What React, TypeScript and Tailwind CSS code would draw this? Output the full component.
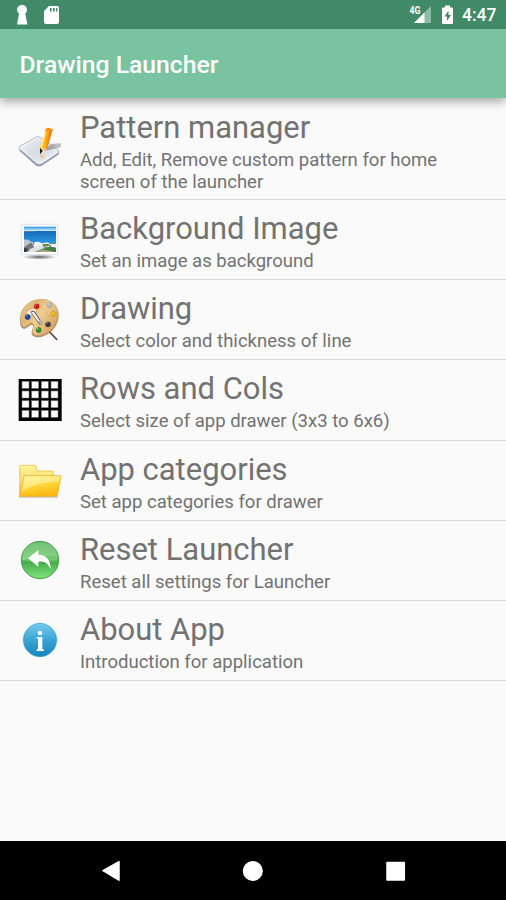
import type { ReactNode } from 'react';

function PatternIcon() {
  return (
    <svg className="block h-[60px] w-[60px]" viewBox="0 0 180 180">
      <defs>
        <linearGradient id="pad" x1="0" y1="0" x2="1" y2="1">
          <stop offset="0" stopColor="#fff" />
          <stop offset=".45" stopColor="#dfe2e8" />
          <stop offset="1" stopColor="#f4f6f8" />
        </linearGradient>
        <linearGradient id="pencil" x1="0" y1="0" x2="1" y2=".35">
          <stop offset=".2" stopColor="#ffe060" />
          <stop offset=".55" stopColor="#ffb21c" />
          <stop offset=".9" stopColor="#f06a00" />
        </linearGradient>
        <linearGradient id="pencilShade" x1="0" y1="0" x2="1" y2="0">
          <stop offset="0" stopColor="#666" />
          <stop offset="1" stopColor="#aaa" />
        </linearGradient>
      </defs>
      <path d="M28 102l52 44q8 4 15 0l52-34v6l-52 34q-8 4-16 0L29 108z" fill="#8997aa" />
      <path d="M29 94l48-27q6-4 13 0l54 38q6 6 0 10l-49 32q-8 4-15-1L29 103q-4-5 0-9z" fill="url(#pad)" stroke="#8e9bae" strokeWidth="2" />
      <path d="M38 98l44-26 50 37-43 31z" fill="#cfd4dc" opacity=".35" />
      <path d="M94 106l34-20 25-1v12l-35 8-24 3z" fill="url(#pencilShade)" opacity=".65" />
      <path d="M91 117l16 8-9 8-8-8z" fill="#eebf90" opacity=".65" />
      <path d="M108 41q9-5 20 3l-16 55-17 14-5-16z" fill="url(#pencil)" />
      <path d="M106 52l-12 42" stroke="#fff2a6" strokeWidth="4" />
      <path d="M108 41q9-5 20 3l-2 6q-10-6-21-2z" fill="#ff8e12" />
      <path d="M90 98l20 3-19 15z" fill="#f7cf93" />
      <path d="M90 99l8 8-8 11z" fill="#171717" />
    </svg>
  );
}

function PhotoIcon() {
  return (
    <svg className="block h-[60px] w-[60px]" viewBox="0 -6 180 180">
      <defs>
        <linearGradient id="sky" x1="0" y1="0" x2="0" y2="1">
          <stop offset="0" stopColor="#238fe0" />
          <stop offset=".15" stopColor="#c9ecff" />
          <stop offset=".19" stopColor="#176bb8" />
          <stop offset=".65" stopColor="#2b98e3" />
        </linearGradient>
        <radialGradient id="photoShadow">
          <stop offset="0" stopColor="#555" />
          <stop offset=".55" stopColor="#777" stopOpacity=".5" />
          <stop offset="1" stopColor="#777" stopOpacity="0" />
        </radialGradient>
      </defs>
      <ellipse cx="88" cy="135" rx="51" ry="8" fill="url(#photoShadow)" />
      <path d="M34 37h109v90H34z" fill="#fff" stroke="#d9dbe5" strokeWidth="2.500" />
      <path d="M42 44h96v76H42z" fill="url(#sky)" />
      <path d="M42 57h26l10 3H42z" fill="#58809e" />
      <path d="M42 80q15 4 29 15l67-2v27H42z" fill="#838c84" />
      <path d="M42 83q18-2 28 14l-12 12-16-2z" fill="#c1c3ce" />
      <path d="M42 106l20-14 17 6-22 22H42z" fill="#76777d" />
      <path d="M42 108l13 3-8 9h-5z" fill="#383a42" />
      <path d="M65 91l20-2 11 5 18-3 6 6 18-1v11l-36-4-27 7z" fill="#edf1f5" />
      <path d="M60 111l27-12 17 8-31 13H54z" fill="#dfe3e2" />
      <path d="M100 112l20-8 18 3v13h-45z" fill="#447f3e" />
      <path d="M80 120l22-7 25 5v2z" fill="#aaa984" />
      <path d="M96 97l18-2 8 7-22 1z" fill="#668b42" />
      <path d="M71 89v8M121 100v5" stroke="#2e4d77" strokeWidth="3" />
    </svg>
  );
}

function PaletteIcon() {
  return (
    <svg className="block h-[60px] w-[60px]" viewBox="0 0 180 180">
      <defs>
        <linearGradient id="wood" x1="0" y1="0" x2="1" y2=".7">
          <stop offset="0" stopColor="#f0cf96" />
          <stop offset=".35" stopColor="#dfb677" />
          <stop offset=".55" stopColor="#efcd92" />
          <stop offset="1" stopColor="#d3a463" />
        </linearGradient>
      </defs>
      <path d="M116 123l24 25" stroke="#63483f" strokeWidth="5" strokeLinecap="round" />
      <path d="M35 69C43 44 70 30 99 31c27 0 47 20 47 44 0 29-20 57-50 65-17 5-32-1-31-12 0-9 9-15 3-22-5-6-13 5-22 10-10 3-16-7-16-23 0-8 2-17 5-24z" fill="#9c7340" opacity=".8" />
      <path d="M35 65C44 41 70 27 98 28c26 0 46 20 46 43 0 29-19 56-48 64-16 5-30-1-29-11 0-9 8-16 1-23-7-6-14 6-23 10-8 2-14-8-14-22 0-9 1-17 4-24z" fill="url(#wood)" stroke="#c1955a" strokeWidth="1.5" />
      <path d="M58 48l60 73M79 34l57 65M37 72l36 36M98 31l41 44" stroke="#c99554" strokeWidth="1.5" opacity=".45" />
      <ellipse cx="64" cy="66" rx="14" ry="7" transform="rotate(-25 64 66)" fill="#f8f1df" />
      <path d="M61 66q6-8 13-2l24 35q-3 7-9 6z" fill="#686c75" />
      <path d="M64 67l7-2 19 28-4 4z" fill="#f3f5f7" />
      <path d="M84 94l9-5 7 12-8 4z" fill="#bbb09c" />
      <g stroke="#00000044" strokeWidth="1">
        <circle cx="80" cy="49" r="8" fill="#cf161b" />
        <circle cx="53" cy="81" r="8" fill="#1840b5" />
        <circle cx="118" cy="45" r="8" fill="#b5b6b6" />
        <circle cx="131" cy="72" r="8" fill="#e8b40c" />
        <circle cx="114" cy="103" r="8" fill="#35383c" />
        <circle cx="86" cy="120" r="8" fill="#278b2e" />
      </g>
      <g fill="#fff" opacity=".5">
        <circle cx="77" cy="46" r="2.5" /><circle cx="50" cy="78" r="2.5" />
        <circle cx="115" cy="42" r="3" /><circle cx="128" cy="69" r="2.5" />
        <circle cx="111" cy="99" r="2.5" /><circle cx="83" cy="116" r="2.5" />
      </g>
    </svg>
  );
}

function GridIcon() {
  const steps = [36, 65, 94, 123];
  return (
    <svg className="block h-[60px] w-[60px]" viewBox="0 0 180 180">
      <path d="M26 27h129v126H26z" fill="#000" />
      {steps.map((y) => steps.map((x) => (
        <rect key={`${x}-${y}`} x={x} y={y - 2} width="21" height="21" fill="#fafafa" stroke="#777" strokeWidth="1.5" />
      )))}
    </svg>
  );
}

function FolderIcon() {
  return (
    <svg className="block h-[60px] w-[60px]" viewBox="0 -12 180 180">
      <defs>
        <linearGradient id="folderBack" x1="0" y1="0" x2="0" y2="1">
          <stop offset="0" stopColor="#fff49e" /><stop offset="1" stopColor="#f5c936" />
        </linearGradient>
        <linearGradient id="folderFront" x1="0" y1="0" x2=".35" y2="1">
          <stop offset="0" stopColor="#fff39a" /><stop offset=".5" stopColor="#ffda43" /><stop offset="1" stopColor="#fbb912" />
        </linearGradient>
      </defs>
      <path d="M27 126h117" stroke="#b1a8a0" strokeWidth="3" />
      <path d="M29 35q0-4 4-4h41q4 0 5 4l2 13h46q4 0 4 4v70H29z" fill="url(#folderBack)" stroke="#e6ba35" strokeWidth="2" />
      <path d="M43 62h107q4 0 3 4l-11 55q-1 3-4 3H28z" fill="url(#folderFront)" stroke="#e2ac21" strokeWidth="2" />
      <path d="M44 64h106l-3 15Q88 81 36 107z" fill="#fff6b0" opacity=".55" />
    </svg>
  );
}

function ResetIcon() {
  return (
    <svg className="block h-[60px] w-[60px]" viewBox="0 3 180 180">
      <defs>
        <linearGradient id="green" x1="0" y1="0" x2="0" y2="1">
          <stop offset="0" stopColor="#4cae50" /><stop offset=".48" stopColor="#70c873" />
          <stop offset=".56" stopColor="#44ae48" /><stop offset="1" stopColor="#83e47f" />
        </linearGradient>
      </defs>
      <circle cx="90" cy="90" r="56" fill="url(#green)" stroke="#459b4c" strokeWidth="3" />
      <path d="M37 80Q43 39 89 36q46 2 54 43Q87 76 37 90z" fill="#b8e8b8" opacity=".35" />
      <path d="M54 85l31-25v14c24 0 37 16 37 43-9-17-18-24-37-22v15z" fill="#fff" />
    </svg>
  );
}

function InfoIcon() {
  return (
    <svg className="block h-[60px] w-[60px]" viewBox="0 3 180 180">
      <defs>
        <linearGradient id="blue" x1="0" y1="0" x2="0" y2="1">
          <stop offset="0" stopColor="#78cbed" /><stop offset=".5" stopColor="#38a5d4" /><stop offset="1" stopColor="#1785bd" />
        </linearGradient>
      </defs>
      <circle cx="90" cy="90" r="50" fill="url(#blue)" stroke="#3a9dca" strokeWidth="2" />
      <circle cx="90" cy="69" r="7" fill="#fff" />
      <path d="M80 81h17v36l4 1v5H80v-5l4-1V86l-4-1z" fill="#fff" />
    </svg>
  );
}

type Item = { title: string; text: string; icon: ReactNode };

const items: Item[] = [
  { title: 'Background Image', text: 'Set an image as background', icon: <PhotoIcon /> },
  { title: 'Drawing', text: 'Select color and thickness of line', icon: <PaletteIcon /> },
  { title: 'Rows and Cols', text: 'Select size of app drawer (3x3 to 6x6)', icon: <GridIcon /> },
  { title: 'App categories', text: 'Set app categories for drawer', icon: <FolderIcon /> },
  { title: 'Reset Launcher', text: 'Reset all settings for Launcher', icon: <ResetIcon /> },
  { title: 'About App', text: 'Introduction for application', icon: <InfoIcon /> },
];

function ItemText({ title, children }: { title: string; children: ReactNode }) {
  return (
    <div className="pl-[10px] text-[#727272]">
      <h2 className="pt-px text-[30.95px] leading-[36px]">{title}</h2>
      <p className="pt-1 text-[18.54px] leading-[21.6px]">{children}</p>
    </div>
  );
}

export default function App() {
  return (
    <div className="flex h-[900px] w-[506px] flex-col overflow-hidden bg-[#fafafa] font-['Roboto',sans-serif]">
      <header className="z-10 shrink-0 shadow-[0_4px_9px_rgba(0,0,0,0.32)]">
        <div className="flex h-[29px] items-center justify-between bg-[#408a67]">
          <svg className="block h-[29px] w-20" viewBox="0 0 80 29" fill="#fff">
            <path d="M17 10a5 5 0 1 1 8.2 3.7l2.3 10.8H17l2-10.8A5 5 0 0 1 17 10z" />
            <path d="M49 6h8q2 0 2 2v14q0 2-2 2H46q-2 0-2-2V11z" />
            <path d="M50 8h1.7v3.5H50zM53 8h1.7v3.5H53zM56 8h1.4v3.5H56z" fill="#408a67" />
          </svg>
          <div className="flex items-center">
            <svg className="block h-[29px] w-[60px]" viewBox="402 0 60 29">
              <path d="M431 6v17h-17z" fill="#8dbba6" />
              <path d="M424.5 12.5V23H414z" fill="#fff" />
              <text x="409.5" y="14" fontSize="10" fontWeight="700" fill="#fff" textLength="11" lengthAdjust="spacingAndGlyphs">4G</text>
              <path d="M445 5.5h5v2h2q1 0 1 1V23q0 1-1 1h-9q-1 0-1-1V8.500q0-1 1-1h2z" fill="#fff" />
              <path d="M448.500 10.500l-4 6h2.500V21l4-6h-2.500z" fill="#408a67" />
            </svg>
            <span className="w-[44px] pt-[2px] text-[17.5px] font-medium leading-[27px] text-white">4:47</span>
          </div>
        </div>
        <div className="flex h-[69px] items-center bg-[#7ac3a0] pl-[19.5px] pt-[3px]">
          <h1 className="text-[24.7px] font-medium leading-[30px] text-white">Drawing Launcher</h1>
        </div>
      </header>
      <main className="flex-1">
        <section className="flex h-[102px] items-start border-b border-[#d8d8d8] pl-[10px]">
          <div className="pt-[17px]"><PatternIcon /></div>
          <div className="pt-[11px]">
            <ItemText title="Pattern manager">Add, Edit, Remove custom pattern for home<br />screen of the launcher</ItemText>
          </div>
        </section>
        {items.map((item) => (
          <section key={item.title} className="flex h-[80.2px] items-start border-b border-[#d8d8d8] pl-[10px] pt-[10px]">
            {item.icon}
            <ItemText title={item.title}>{item.text}</ItemText>
          </section>
        ))}
      </main>
      <nav className="h-[59px] shrink-0 bg-black">
        <svg className="block h-[59px] w-[506px]" viewBox="0 841 506 59" fill="#fff" stroke="#fff" strokeLinejoin="round" strokeWidth="1.5">
          <path d="M103 870.700l16-9v18.500z" />
          <circle cx="252.800" cy="871" r="9.300" />
          <path d="M387 862.500h17.300V880H387z" />
        </svg>
      </nav>
    </div>
  );
}
